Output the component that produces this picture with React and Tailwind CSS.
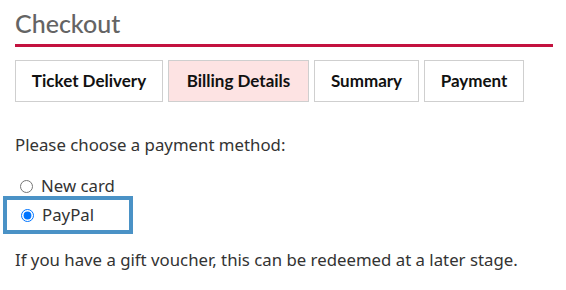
import React, { useState } from "react";

const tabs = [
  { label: "Ticket Delivery", w: "w-[148px]" },
  { label: "Billing Details", w: "w-[141px]", active: true },
  { label: "Summary", w: "w-[105px]" },
  { label: "Payment", w: "w-[100px]" },
];

export default function App() {
  const [method, setMethod] = useState("paypal");

  return (
    <div className="w-[566px] h-[290px] bg-white font-['Noto_Sans',sans-serif] text-[#333]">
      <div className="px-[15px] pt-[8px]">
        <h1 className="font-['Lato',sans-serif] text-[25px] leading-[30px] text-[#646464] font-medium">
          Checkout
        </h1>
        <div className="mt-[6px] h-[3px] w-[538px] bg-[#c3123f]" />

        <div className="mt-[13px] flex gap-[5px]">
          {tabs.map((t) => (
            <div
              key={t.label}
              className={
                "h-[42px] flex items-center justify-center border border-[#cfcfcf] font-['Lato',sans-serif] font-bold text-[17px] text-[#111] " +
                t.w +
                (t.active ? " bg-[#fde3e3]" : " bg-white")
              }
            >
              {t.label}
            </div>
          ))}
        </div>

        <p className="mt-[32px] text-[16.8px] leading-[22px]">Please choose a payment method:</p>
      </div>

      <div className="mt-[19px] flex flex-col">
        <label className="ml-[20px] h-[22px] flex items-center gap-[8px] text-[16.8px]">
          <input
            type="radio"
            name="pm"
            checked={method === "card"}
            onChange={() => setMethod("card")}
            className="w-[13px] h-[13px] m-0"
          />
          New card
        </label>
        <label className="ml-[3px] mt-[-1px] w-[130px] h-[38px] border-4 border-[#4a92c6] flex items-center gap-[8px] pl-[14px] text-[16.8px]">
          <input
            type="radio"
            name="pm"
            checked={method === "paypal"}
            onChange={() => setMethod("paypal")}
            className="w-[13px] h-[13px] m-0"
          />
          PayPal
        </label>
      </div>

      <p className="px-[15px] mt-[15px] text-[16.8px] leading-[22px]">
        If you have a gift voucher, this can be redeemed at a later stage.
      </p>
    </div>
  );
}
